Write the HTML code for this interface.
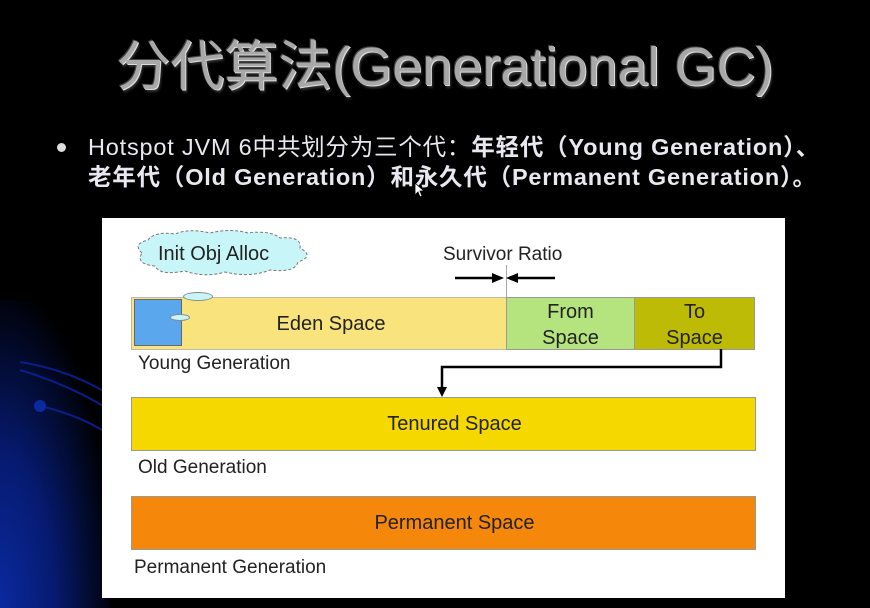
<!DOCTYPE html>
<html><head><meta charset="utf-8"><style>
body{margin:0;width:870px;height:608px;overflow:hidden;background:#000;position:relative;font-family:"Liberation Sans","Noto Sans CJK SC",sans-serif}
.a{position:absolute}
.t{left:0;width:890px;top:22px;text-align:center;font-size:54px;color:#a8a8a8;text-shadow:1px 1px 0 #ddd,-1px -1px 0 #444,2px 3px 2px #333}
.b{color:#e8e8f0;font-size:23.5px;left:88px;line-height:30px;letter-spacing:0.8px}
.d{font-size:17px;color:#222}
.box{position:absolute;border:1px solid #999;box-sizing:border-box;display:flex;align-items:center;justify-content:center;text-align:center;font-size:20px;color:#222;line-height:26px}
</style></head><body>
<div class="a" style="left:0;top:300px;width:110px;height:308px;background:radial-gradient(ellipse at 0% 100%,#0a2aa0 0%,#061a70 35%,#000 75%)"></div>
<svg class="a" style="left:0;top:300px" width="110" height="140"><path d="M20 62 Q70 70 110 95" stroke="#0a1e8a" stroke-width="2" fill="none"/><path d="M20 70 Q70 85 110 110" stroke="#0a1e8a" stroke-width="2" fill="none"/><path d="M40 106 Q80 115 110 135" stroke="#0a1e8a" stroke-width="2" fill="none"/><circle cx="40" cy="106" r="6" fill="#0a2aa0"/></svg>
<div class="a t">分代算法(Generational GC)</div>
<div class="a" style="left:57px;top:143px;width:9px;height:9px;border-radius:50%;background:#ddd"></div>
<div class="a b" style="top:132px;white-space:nowrap">Hotspot JVM 6中共划分为三个代：<b>年轻代（Young Generation）、<br>老年代（Old Generation）和永久代（Permanent Generation）。</b></div>
<svg class="a" style="left:414px;top:182px" width="12" height="16"><path d="M1 1V13L4 10L6 15L8 14L6 9H10Z" fill="#fff" stroke="#000" stroke-width="0.8"/></svg>
<div class="a" style="left:102px;top:218px;width:683px;height:380px;background:#fff"></div>
<svg class="a" style="left:130px;top:228px" width="190" height="50"><path d="M12 25 Q2 16 18 12 Q25 3 45 6 Q60 0 80 5 Q100 0 118 5 Q140 2 150 10 Q172 8 170 20 Q185 28 168 34 Q165 45 140 42 Q120 50 95 44 Q75 50 55 43 Q30 48 25 38 Q5 36 12 25Z" fill="#c8f6f8" stroke="#777" stroke-dasharray="3 2"/></svg>
<div class="a d" style="left:158px;top:243px;font-size:20px">Init Obj Alloc</div>
<div class="a d" style="left:443px;top:244px;font-size:19px">Survivor Ratio</div>
<div class="a" style="left:506px;top:265px;width:1px;height:32px;background:#aaa"></div>
<svg class="a" style="left:450px;top:270px" width="110" height="16"><path d="M5 8H50" stroke="#000" stroke-width="2.5"/><path d="M42 3L54 8L42 13Z"/><path d="M60 8H105" stroke="#000" stroke-width="2.5"/><path d="M68 3L56 8L68 13Z"/></svg>
<div class="box" style="left:131px;top:297px;width:376px;height:53px;background:#f8e37c;border-color:#bba;padding-left:24px">Eden Space</div>
<div class="a" style="left:134px;top:299px;width:46px;height:45px;background:#5aa7ee;border:1px solid #667"></div>
<div class="a" style="left:183px;top:292px;width:28px;height:7px;border-radius:50%;background:#c8f6f8;border:1px solid #888"></div>
<div class="a" style="left:170px;top:314px;width:18px;height:5px;border-radius:50%;background:#c8f6f8;border:1px solid #888"></div>
<div class="box" style="left:506px;top:297px;width:129px;height:53px;background:#b5e47e;padding-top:2px">From<br>Space</div>
<div class="box" style="left:634px;top:297px;width:121px;height:53px;background:#bdbb05;padding-top:2px">To<br>Space</div>
<div class="a d" style="left:138px;top:353px;font-size:19px">Young Generation</div>
<svg class="a" style="left:430px;top:349px" width="300" height="50"><path d="M291 0V18H12V42" stroke="#000" stroke-width="2.5" fill="none"/><path d="M7 38L12 48L17 38Z"/></svg>
<div class="box" style="left:131px;top:397px;width:625px;height:54px;background:#f5d800;padding-left:22px">Tenured Space</div>
<div class="a d" style="left:138px;top:457px;font-size:19px">Old Generation</div>
<div class="box" style="left:131px;top:496px;width:625px;height:54px;background:#f5870a;padding-left:22px">Permanent Space</div>
<div class="a d" style="left:134px;top:557px;font-size:19px">Permanent Generation</div>
</body></html>
